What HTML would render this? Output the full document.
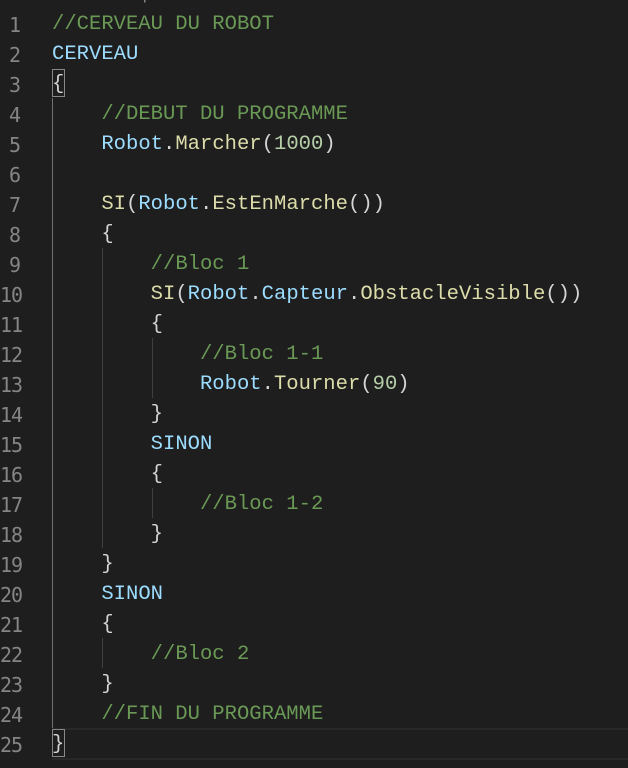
<!DOCTYPE html>
<html><head><meta charset="utf-8"><style>
html,body{margin:0;padding:0;background:#1e1e1e;width:628px;height:768px;overflow:hidden}
.ln{position:absolute;left:0;width:20px;text-align:right;color:#858585;font:20px/30px "DejaVu Sans Mono","Liberation Mono",monospace;letter-spacing:-1px;margin-top:2px}
.c{position:absolute;left:52px;white-space:pre;font:20.55px/30px "Liberation Mono",monospace;color:#d4d4d4;margin-top:2px}
.cm{color:#6a9955}.v{color:#9cdcfe}.f{color:#dcdcaa}.n{color:#b5cea8}
.g{position:absolute;width:1px;background:#404040}
.cur{position:absolute;left:52px;right:0;top:728px;height:28px;border-top:2px solid #282828;border-bottom:2px solid #282828}
.bm{position:absolute;border:1px solid #888;width:11px;height:26px}
.top{position:absolute;top:-12px;left:4px;font:13px "Liberation Sans",sans-serif;color:#a0a0a0;white-space:pre}
</style></head><body>
<div class="top">Users › Nathan › Desktop › <span style="color:#3c9a3c">●</span> Untitled-1.txt</div>
<div class="cur"></div>
<div class="g" style="left:52px;top:98px;height:630px;background:#707070"></div>
<div class="g" style="left:102px;top:248px;height:300px"></div>
<div class="g" style="left:102px;top:638px;height:30px"></div>
<div class="g" style="left:152px;top:338px;height:60px"></div>
<div class="g" style="left:152px;top:488px;height:30px"></div>
<div class="bm" style="left:52px;top:69px"></div>
<div class="bm" style="left:52px;top:729px"></div>
<div class="ln" style="top:8px">1</div><div class="c" style="top:8px"><span class="cm">//CERVEAU DU ROBOT</span></div>
<div class="ln" style="top:38px">2</div><div class="c" style="top:38px"><span class="v">CERVEAU</span></div>
<div class="ln" style="top:68px">3</div><div class="c" style="top:68px">{</div>
<div class="ln" style="top:98px">4</div><div class="c" style="top:98px">    <span class="cm">//DEBUT DU PROGRAMME</span></div>
<div class="ln" style="top:128px">5</div><div class="c" style="top:128px">    <span class="v">Robot</span>.<span class="f">Marcher</span>(<span class="n">1000</span>)</div>
<div class="ln" style="top:158px">6</div>
<div class="ln" style="top:188px">7</div><div class="c" style="top:188px">    <span class="f">SI</span>(<span class="v">Robot</span>.<span class="f">EstEnMarche</span>())</div>
<div class="ln" style="top:218px">8</div><div class="c" style="top:218px">    {</div>
<div class="ln" style="top:248px">9</div><div class="c" style="top:248px">        <span class="cm">//Bloc 1</span></div>
<div class="ln" style="top:278px">10</div><div class="c" style="top:278px">        <span class="f">SI</span>(<span class="v">Robot</span>.<span class="v">Capteur</span>.<span class="f">ObstacleVisible</span>())</div>
<div class="ln" style="top:308px">11</div><div class="c" style="top:308px">        {</div>
<div class="ln" style="top:338px">12</div><div class="c" style="top:338px">            <span class="cm">//Bloc 1-1</span></div>
<div class="ln" style="top:368px">13</div><div class="c" style="top:368px">            <span class="v">Robot</span>.<span class="f">Tourner</span>(<span class="n">90</span>)</div>
<div class="ln" style="top:398px">14</div><div class="c" style="top:398px">        }</div>
<div class="ln" style="top:428px">15</div><div class="c" style="top:428px">        <span class="v">SINON</span></div>
<div class="ln" style="top:458px">16</div><div class="c" style="top:458px">        {</div>
<div class="ln" style="top:488px">17</div><div class="c" style="top:488px">            <span class="cm">//Bloc 1-2</span></div>
<div class="ln" style="top:518px">18</div><div class="c" style="top:518px">        }</div>
<div class="ln" style="top:548px">19</div><div class="c" style="top:548px">    }</div>
<div class="ln" style="top:578px">20</div><div class="c" style="top:578px">    <span class="v">SINON</span></div>
<div class="ln" style="top:608px">21</div><div class="c" style="top:608px">    {</div>
<div class="ln" style="top:638px">22</div><div class="c" style="top:638px">        <span class="cm">//Bloc 2</span></div>
<div class="ln" style="top:668px">23</div><div class="c" style="top:668px">    }</div>
<div class="ln" style="top:698px">24</div><div class="c" style="top:698px">    <span class="cm">//FIN DU PROGRAMME</span></div>
<div class="ln" style="top:728px">25</div><div class="c" style="top:728px">}</div>
</body></html>
